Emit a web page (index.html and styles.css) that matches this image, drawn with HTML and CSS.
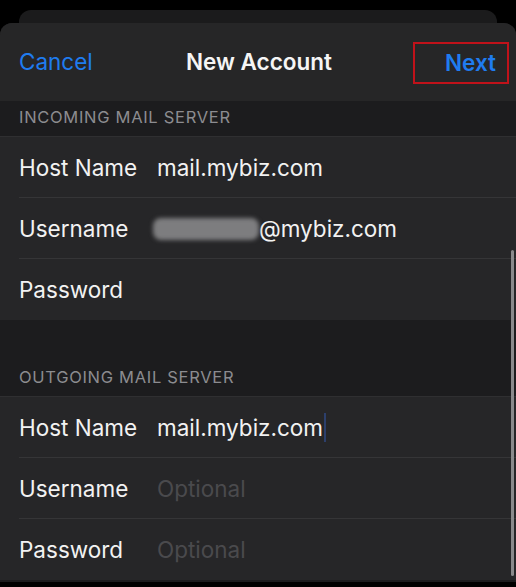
FILE: index.html
```html
<!DOCTYPE html>
<html>
<head>
<meta charset="utf-8">
<link rel="stylesheet" href="styles.css">
</head>
<body>
<div class="screen">
  <div class="backcard"></div>
  <div class="sheet">
    <div class="navbar">
      <span class="nav-cancel">Cancel</span>
      <span class="nav-title">New Account</span>
      <span class="nav-next">Next</span>
    </div>
    <div class="section-header first">INCOMING MAIL SERVER</div>
    <div class="group">
      <div class="row"><span class="label">Host Name</span><span class="value">mail.mybiz.com</span></div>
      <div class="row"><span class="label">Username</span><span class="value"><span class="blur"></span>@mybiz.com</span></div>
      <div class="row"><span class="label">Password</span><span class="value"></span></div>
    </div>
    <div class="section-header second">OUTGOING MAIL SERVER</div>
    <div class="group">
      <div class="row"><span class="label">Host Name</span><span class="value">mail.mybiz.com<span class="caret"></span></span></div>
      <div class="row"><span class="label">Username</span><span class="value placeholder">Optional</span></div>
      <div class="row"><span class="label">Password</span><span class="value placeholder">Optional</span></div>
    </div>
    <div class="scrollbar"></div>
  </div>
</div>
</body>
</html>
```

FILE: styles.css
```css
html, body {
  margin: 0;
  padding: 0;
  background: #000;
}
body {
  font-family: Inter, "Liberation Sans", sans-serif;
  width: 516px;
  height: 587px;
  overflow: hidden;
}
.screen {
  position: relative;
  width: 516px;
  height: 587px;
  background: #000;
  padding-top: 23px;
  box-sizing: border-box;
}
.backcard {
  position: absolute;
  left: 19px;
  right: 19px;
  top: 10px;
  height: 40px;
  background: #1b1b1c;
  border-radius: 12px;
}
.sheet {
  position: relative;
  background: #1c1c1e;
  border-radius: 12px 12px 0 0;
  height: 559px;
  overflow: hidden;
}
.navbar {
  height: 78px;
  background: #262627;
  display: flex;
  align-items: center;
  justify-content: space-between;
  padding: 0 20px 0 19px;
  position: relative;
  font-size: 22.5px;
}
.nav-cancel {
  color: #1f7cf0;
  margin-top: -2px;
}
.nav-title {
  color: #f5f5f5;
  font-weight: 600;
  position: absolute;
  left: 0;
  right: 0;
  text-align: center;
  pointer-events: none;
  padding-left: 2px;
  margin-top: -2px;
}
.nav-next {
  color: #1f7cf0;
  font-weight: 600;
  border: 2px solid #c0121a;
  width: 96px;
  height: 42px;
  box-sizing: border-box;
  display: flex;
  align-items: center;
  justify-content: flex-end;
  padding-right: 11px;
  padding-bottom: 2px;
  margin-right: -13px;
  margin-top: 2px;
}
.section-header {
  color: #8c8c90;
  font-size: 16.5px;
  padding-left: 19px;
  background: #1c1c1e;
  box-sizing: border-box;
  letter-spacing: 0.7px;
  display: flex;
  align-items: flex-end;
}
.section-header.first {
  height: 35px;
  padding-bottom: 9px;
}
.section-header.second {
  height: 76px;
  padding-bottom: 9px;
}
.group {
  background: #262628;
  border-top: 1px solid #2f2f31;
}
.row {
  height: 61px;
  display: flex;
  align-items: center;
  margin-left: 19px;
  border-bottom: 1px solid #353537;
  box-sizing: border-box;
  font-size: 22.5px;
  color: #f2f2f2;
}
.row:last-child {
  border-bottom: none;
}
.label {
  width: 138px;
  flex: none;
}
.value {
  display: flex;
  align-items: center;
  color: #f2f2f2;
  position: relative;
}
.placeholder {
  color: #4a4a4d;
}
.blur {
  display: inline-block;
  width: 106px;
  height: 22px;
  background: #7d7d7f;
  border-radius: 8px;
  filter: blur(2px);
  margin-left: -4px;
  margin-top: 2px;
}
.caret {
  display: inline-block;
  width: 2px;
  height: 29px;
  background: #2c3f6c;
  margin-left: 1px;
}
.scrollbar {
  position: absolute;
  right: 2px;
  top: 227px;
  width: 3px;
  height: 326px;
  background: #8a8a8c;
  border-radius: 2px;
}
```
